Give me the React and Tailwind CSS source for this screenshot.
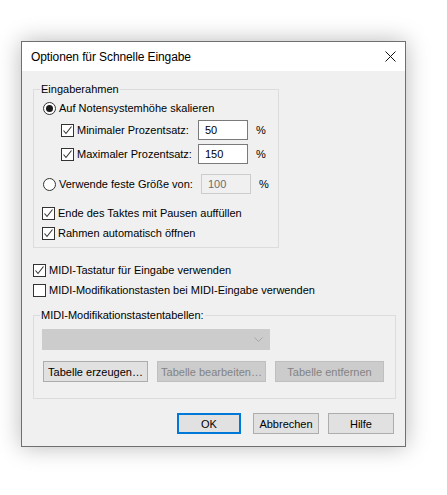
import React from 'react';

const FONT = { fontFamily: '"Liberation Sans", Arial, sans-serif' };

function Check({ checked }) {
  return (
    <span className="w-[13px] h-[13px] border border-[#333333] bg-white flex items-center justify-center shrink-0">
      {checked && (
        <svg width="11" height="11" viewBox="0 0 11 11">
          <polyline points="1.5,5.5 4,8.5 9.5,1.5" fill="none" stroke="#333333" strokeWidth="1.1" />
        </svg>
      )}
    </span>
  );
}

function Radio({ checked }) {
  return (
    <span className="w-[13px] h-[13px] rounded-full border border-[#333333] bg-white flex items-center justify-center shrink-0">
      {checked && <span className="w-[7px] h-[7px] rounded-full bg-[#1a1a1a]" />}
    </span>
  );
}

function Field({ value, disabled }) {
  return (
    <span
      className={
        disabled
          ? 'w-[50px] h-[20px] border border-[#cccccc] bg-[#f0f0f0] text-[#6d6d6d] flex items-center pl-[6px] shrink-0'
          : 'w-[50px] h-[20px] border border-[#7a7a7a] bg-white text-black flex items-center pl-[6px] shrink-0'
      }
    >
      {value}
    </span>
  );
}

function Btn({ children, disabled, primary, w }) {
  let cls = 'h-[21px] flex items-center justify-center shrink-0 whitespace-nowrap ';
  if (disabled) cls += 'bg-[#cccccc] border border-[#bfbfbf] text-[#838383]';
  else if (primary) cls += 'bg-[#e1e1e1] border-2 border-[#0078d7] text-black';
  else cls += 'bg-[#e1e1e1] border border-[#adadad] text-black';
  return (
    <span className={cls} style={{ width: w }}>
      {children}
    </span>
  );
}

export default function App() {
  return (
    <div className="w-[447px] h-[495px] bg-white pt-[41px] pl-[21px] text-[11px] leading-[16px] whitespace-nowrap text-black" style={FONT}>
      <div className="w-[385px] h-[406px] border border-[#6f6f6f] bg-[#f0f0f0] flex flex-col shadow-[0_0_22px_rgba(0,0,0,0.28)]">
        {/* title bar */}
        <div className="h-[29px] bg-white flex items-center justify-between pl-[9px] pr-[9px] shrink-0 text-[12px] tracking-[-0.1px]">
          <span>Optionen für Schnelle Eingabe</span>
          <svg width="11" height="11" viewBox="0 0 11 11">
            <path d="M0.5 0.5 L10.5 10.5 M10.5 0.5 L0.5 10.5" stroke="#111" strokeWidth="1" />
          </svg>
        </div>

        <div className="pl-[11px] pt-[18px] flex flex-col">
          {/* Eingaberahmen */}
          <div className="w-[246px] h-[159px] border border-[#dcdcdc] flex flex-col">
            <span className="block w-fit -mt-[9px] ml-[6px] px-[1px] bg-[#f0f0f0]">Eingaberahmen</span>
            <div className="pl-[9px] pt-[1px] flex flex-col">
              <div className="h-[20px] flex items-center gap-[3px]">
                <Radio checked />
                <span>Auf Notensystemhöhe skalieren</span>
              </div>
              <div className="h-[20px] mt-[2px] flex items-center pl-[18px]">
                <Check checked />
                <span className="ml-[3px] w-[121px]">Minimaler Prozentsatz:</span>
                <Field value="50" />
                <span className="ml-[8px]">%</span>
              </div>
              <div className="h-[20px] mt-[4px] flex items-center pl-[18px]">
                <Check checked />
                <span className="ml-[3px] w-[121px]">Maximaler Prozentsatz:</span>
                <Field value="150" />
                <span className="ml-[8px]">%</span>
              </div>
              <div className="h-[20px] mt-[10px] flex items-center">
                <Radio />
                <span className="ml-[3px] w-[142px]">Verwende feste Größe von:</span>
                <Field value="100" disabled />
                <span className="ml-[8px]">%</span>
              </div>
              <div className="h-[20px] mt-[9px] flex items-center gap-[3px] -ml-[1px]">
                <Check checked />
                <span>Ende des Taktes mit Pausen auffüllen</span>
              </div>
              <div className="h-[20px] flex items-center gap-[3px] -ml-[1px]">
                <Check checked />
                <span>Rahmen automatisch öffnen</span>
              </div>
            </div>
          </div>

          <div className="h-[20px] mt-[12px] flex items-center gap-[3px]">
            <Check checked />
            <span>MIDI-Tastatur für Eingabe verwenden</span>
          </div>
          <div className="h-[20px] flex items-center gap-[3px]">
            <Check />
            <span>MIDI-Modifikationstasten bei MIDI-Eingabe verwenden</span>
          </div>

          {/* MIDI-Modifikationstastentabellen */}
          <div className="w-[363px] h-[84px] mt-[15px] border border-[#dcdcdc] flex flex-col">
            <span className="block w-fit -mt-[9px] ml-[6px] px-[1px] bg-[#f0f0f0]">MIDI-Modifikationstastentabellen:</span>
            <div className="pl-[8px] pt-[6px] flex flex-col">
              <div className="w-[228px] h-[21px] bg-[#cccccc] border border-[#cccccc] flex items-center justify-end pr-[6px]">
                <svg width="9" height="6" viewBox="0 0 9 6">
                  <polyline points="0.5,0.5 4.5,4.5 8.5,0.5" fill="none" stroke="#a6a6a6" strokeWidth="1" />
                </svg>
              </div>
              <div className="mt-[11px] flex items-center gap-[9px] pl-[1px]">
                <Btn w="105px">Tabelle erzeugen…</Btn>
                <Btn w="109px" disabled>Tabelle bearbeiten…</Btn>
                <Btn w="109px" disabled>Tabelle entfernen</Btn>
              </div>
            </div>
          </div>

          {/* bottom buttons */}
          <div className="mt-[14px] flex items-center pl-[144px]">
            <Btn w="64px" primary>OK</Btn>
            <span className="ml-[12px]"><Btn w="66px">Abbrechen</Btn></span>
            <span className="ml-[9px]"><Btn w="66px">Hilfe</Btn></span>
          </div>
        </div>
      </div>
    </div>
  );
}
